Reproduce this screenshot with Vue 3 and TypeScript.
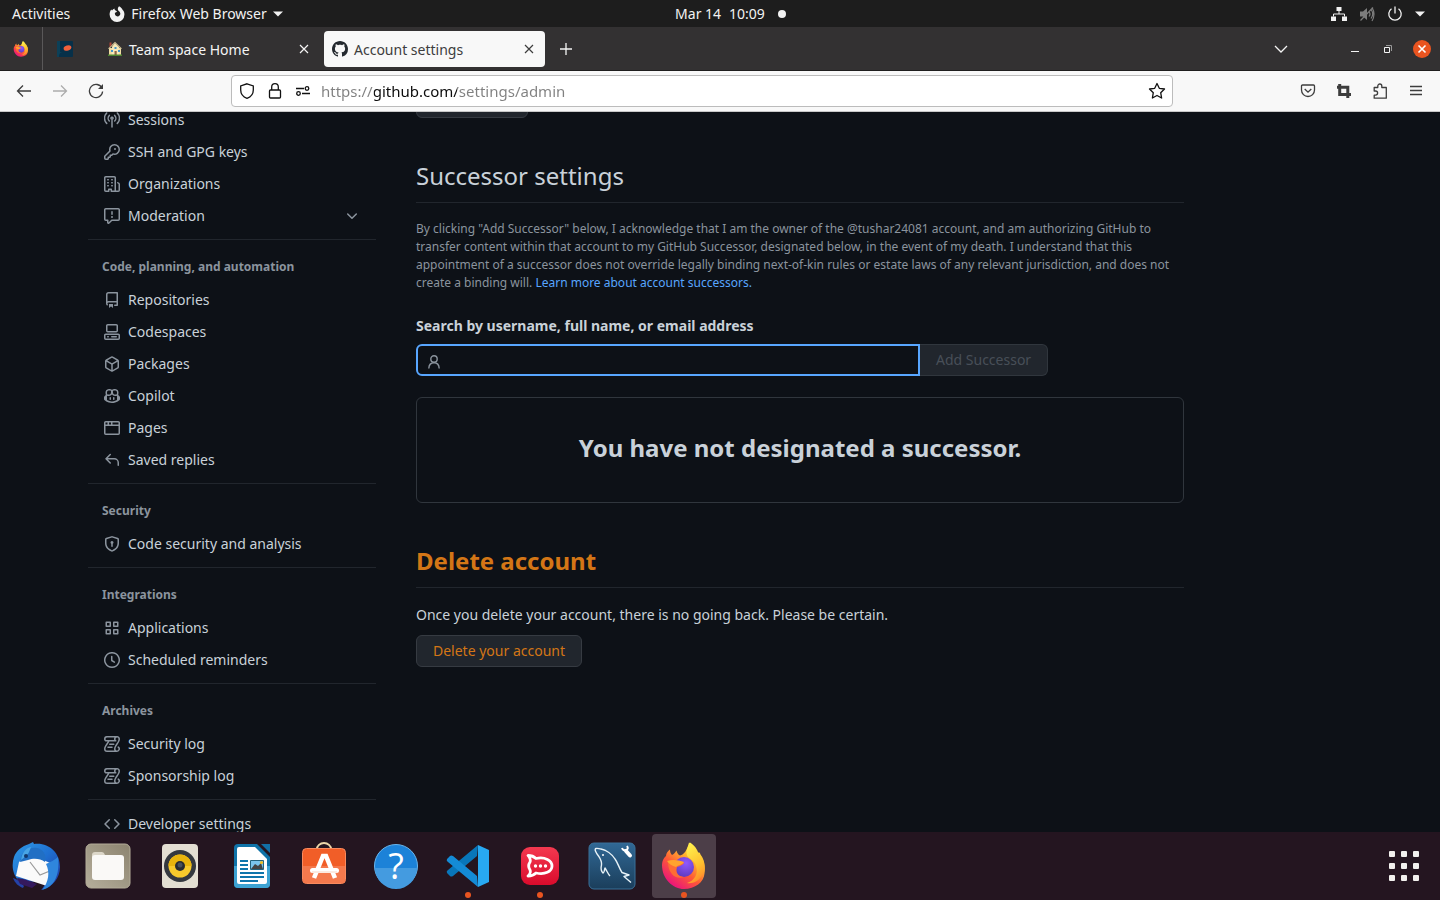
<script setup lang="ts">
import { ref } from 'vue'

interface NavItem {
  label: string
  icon: string
  expandable?: boolean
}
interface NavGroup {
  title?: string
  items: NavItem[]
}
interface Glyph {
  d: string
  outline?: boolean
}

const glyphs: Record<string, Glyph> = {
  broadcast: {
    outline: true,
    d: 'M8 8.5V15M8 5.2a1 1 0 1 0 .01 0M5.3 9a4 4 0 0 1 0-5.6M10.7 9a4 4 0 0 0 0-5.6M2.7 11.4a7.3 7.3 0 0 1 0-10.4M13.3 11.4a7.3 7.3 0 0 0 0-10.4',
  },
  key: {
    d: 'M10.5 0a5.499 5.499 0 1 1-1.288 10.848l-.932.932a.749.749 0 0 1-.53.22H7v.75a.749.749 0 0 1-.22.53l-.5.5a.749.749 0 0 1-.53.22H5v.75a.749.749 0 0 1-.22.53l-.5.5a.749.749 0 0 1-.53.22h-2A1.75 1.75 0 0 1 0 14.25v-2c0-.199.079-.389.22-.53l4.932-4.932A5.5 5.5 0 0 1 10.5 0Zm-4 5.5c-.001.431.069.86.205 1.269a.75.75 0 0 1-.181.768L1.5 12.56v1.69c0 .138.112.25.25.25h1.69l.06-.06v-1.19a.75.75 0 0 1 .75-.75h1.19l.06-.06v-1.19a.75.75 0 0 1 .75-.75h1.19l1.023-1.025a.75.75 0 0 1 .768-.18A4 4 0 1 0 6.5 5.5ZM11 6a1 1 0 1 1 0-2 1 1 0 0 1 0 2Z',
  },
  organization: {
    d: 'M1.75 16A1.75 1.75 0 0 1 0 14.25V1.75C0 .784.784 0 1.75 0h8.5C11.216 0 12 .784 12 1.75v12.5c0 .085-.006.168-.018.25h2.268a.25.25 0 0 0 .25-.25V8.285a.25.25 0 0 0-.111-.208l-1.055-.703a.749.749 0 1 1 .832-1.248l1.055.703c.487.325.779.871.779 1.456v5.965A1.75 1.75 0 0 1 14.25 16h-3.5a.766.766 0 0 1-.197-.026c-.099.017-.2.026-.303.026h-3a.75.75 0 0 1-.75-.75V14h-1v1.25a.75.75 0 0 1-.75.75Zm-.25-1.75c0 .138.112.25.25.25H4v-1.25a.75.75 0 0 1 .75-.75h2.5a.75.75 0 0 1 .75.75v1.25h2.25a.25.25 0 0 0 .25-.25V1.75a.25.25 0 0 0-.25-.25h-8.5a.25.25 0 0 0-.25.25ZM3.75 6h.5a.75.75 0 0 1 0 1.5h-.5a.75.75 0 0 1 0-1.5ZM3 3.75A.75.75 0 0 1 3.75 3h.5a.75.75 0 0 1 0 1.5h-.5A.75.75 0 0 1 3 3.75Zm4 3A.75.75 0 0 1 7.75 6h.5a.75.75 0 0 1 0 1.5h-.5A.75.75 0 0 1 7 6.75ZM7.75 3h.5a.75.75 0 0 1 0 1.5h-.5a.75.75 0 0 1 0-1.5ZM3 9.75A.75.75 0 0 1 3.75 9h.5a.75.75 0 0 1 0 1.5h-.5A.75.75 0 0 1 3 9.75ZM7.75 9h.5a.75.75 0 0 1 0 1.5h-.5a.75.75 0 0 1 0-1.5Z',
  },
  report: {
    d: 'M0 1.75C0 .784.784 0 1.75 0h12.5C15.216 0 16 .784 16 1.75v9.5A1.75 1.75 0 0 1 14.25 13H8.06l-2.573 2.573A1.458 1.458 0 0 1 3 14.543V13H1.75A1.75 1.75 0 0 1 0 11.25Zm1.75-.25a.25.25 0 0 0-.25.25v9.5c0 .138.112.25.25.25h2a.75.75 0 0 1 .75.75v2.19l2.72-2.72a.749.749 0 0 1 .53-.22h6.5a.25.25 0 0 0 .25-.25v-9.5a.25.25 0 0 0-.25-.25Zm7 2.25v2.5a.75.75 0 0 1-1.5 0v-2.5a.75.75 0 0 1 1.5 0ZM9 9a1 1 0 1 1-2 0 1 1 0 0 1 2 0Z',
  },
  repo: {
    d: 'M2 2.5A2.5 2.5 0 0 1 4.5 0h8.75a.75.75 0 0 1 .75.75v12.5a.75.75 0 0 1-.75.75h-2.5a.75.75 0 0 1 0-1.5h1.75v-2h-8a1 1 0 0 0-.714 1.7.75.75 0 1 1-1.072 1.05A2.495 2.495 0 0 1 2 11.5Zm10.5-1h-8a1 1 0 0 0-1 1v6.708A2.486 2.486 0 0 1 4.5 9h8ZM5 12.25a.25.25 0 0 1 .25-.25h3.5a.25.25 0 0 1 .25.25v3.25a.25.25 0 0 1-.4.2l-1.45-1.087a.249.249 0 0 0-.3 0L5.4 15.7a.25.25 0 0 1-.4-.2Z',
  },
  codespaces: {
    d: 'M0 11.25c0-.966.784-1.75 1.75-1.75h12.5c.966 0 1.75.784 1.75 1.75v3A1.75 1.75 0 0 1 14.25 16H1.75A1.75 1.75 0 0 1 0 14.25Zm2-9.5C2 .784 2.784 0 3.75 0h8.5C13.216 0 14 .784 14 1.75v5a1.75 1.75 0 0 1-1.75 1.75h-8.5A1.75 1.75 0 0 1 2 6.75Zm1.75-.25a.25.25 0 0 0-.25.25v5c0 .138.112.25.25.25h8.5a.25.25 0 0 0 .25-.25v-5a.25.25 0 0 0-.25-.25Zm-2 9.5a.25.25 0 0 0-.25.25v3c0 .138.112.25.25.25h12.5a.25.25 0 0 0 .25-.25v-3a.25.25 0 0 0-.25-.25ZM7 12.75a.75.75 0 0 1 .75-.75h4.5a.75.75 0 0 1 0 1.5h-4.5a.75.75 0 0 1-.75-.75Zm-4 0a.75.75 0 0 1 .75-.75h.5a.75.75 0 0 1 0 1.5h-.5a.75.75 0 0 1-.75-.75Z',
  },
  package: {
    d: 'm8.878.392 5.25 3.045c.54.314.872.89.872 1.514v6.098a1.75 1.75 0 0 1-.872 1.514l-5.25 3.045a1.75 1.75 0 0 1-1.756 0l-5.25-3.045A1.75 1.75 0 0 1 1 11.049V4.951c0-.624.332-1.201.872-1.514L7.122.392a1.75 1.75 0 0 1 1.756 0ZM7.875 1.69l-4.63 2.685L8 7.133l4.755-2.758-4.63-2.685a.248.248 0 0 0-.25 0ZM2.5 5.677v5.372c0 .09.047.171.125.216l4.625 2.683V8.432Zm6.25 8.271 4.625-2.683a.25.25 0 0 0 .125-.216V5.677L8.75 8.432Z',
  },
  copilot: {
    d: 'M7.998 15.035c-4.562 0-7.873-2.914-7.998-3.749V9.338c.085-.628.677-1.686 1.588-2.065.013-.07.024-.143.036-.218.029-.183.06-.384.126-.612-.201-.508-.254-1.084-.254-1.656 0-.87.128-1.769.693-2.484.579-.733 1.494-1.124 2.724-1.261 1.206-.134 2.262.034 2.944.765.05.053.096.108.139.165.044-.057.094-.112.143-.165.682-.731 1.738-.899 2.944-.765 1.23.137 2.145.528 2.724 1.261.566.715.693 1.614.693 2.484 0 .572-.053 1.148-.254 1.656.066.228.098.429.126.612.012.076.024.148.037.218.924.385 1.522 1.471 1.591 2.095v1.872c0 .766-3.351 3.795-8.002 3.795Zm0-1.485c2.28 0 4.584-1.11 5.002-1.433V7.862l-.023-.116c-.49.21-1.075.291-1.727.291-1.146 0-2.059-.327-2.71-.991A3.222 3.222 0 0 1 8 6.303a3.24 3.24 0 0 1-.544.743c-.65.664-1.563.991-2.71.991-.652 0-1.236-.081-1.727-.291l-.023.116v4.255c.419.323 2.722 1.433 5.002 1.433ZM6.762 2.83c-.193-.206-.637-.413-1.682-.297-1.019.113-1.479.404-1.713.7-.247.312-.369.789-.369 1.554 0 .793.129 1.171.308 1.371.162.181.519.379 1.442.379.853 0 1.339-.235 1.638-.54.315-.322.527-.827.617-1.553.117-.935-.037-1.395-.241-1.614Zm4.155-.297c-1.044-.116-1.488.091-1.681.297-.204.219-.359.679-.242 1.614.091.726.303 1.231.618 1.553.299.305.784.54 1.638.54.922 0 1.28-.198 1.442-.379.179-.2.308-.578.308-1.371 0-.765-.123-1.242-.37-1.554-.233-.296-.693-.587-1.713-.7ZM6.25 9.037a.75.75 0 0 1 .75.75v1.501a.75.75 0 0 1-1.5 0V9.787a.75.75 0 0 1 .75-.75Zm4.25.75v1.501a.75.75 0 0 1-1.5 0V9.787a.75.75 0 0 1 1.5 0Z',
  },
  browser: {
    d: 'M0 2.75C0 1.784.784 1 1.75 1h12.5c.966 0 1.75.784 1.75 1.75v10.5A1.75 1.75 0 0 1 14.25 15H1.75A1.75 1.75 0 0 1 0 13.25ZM14.5 6h-13v7.25c0 .138.112.25.25.25h12.5a.25.25 0 0 0 .25-.25Zm-6-3.5v2h6V2.75a.25.25 0 0 0-.25-.25ZM5 2.5v2h2v-2Zm-3.25 0a.25.25 0 0 0-.25.25V4.5h2v-2Z',
  },
  reply: {
    d: 'M6.78 1.97a.75.75 0 0 1 0 1.06L3.81 6h6.44A4.75 4.75 0 0 1 15 10.75v2.5a.75.75 0 0 1-1.5 0v-2.5a3.25 3.25 0 0 0-3.25-3.25H3.81l2.97 2.97a.749.749 0 1 1-1.06 1.06L1.47 7.28a.75.75 0 0 1 0-1.06l4.25-4.25a.75.75 0 0 1 1.06 0Z',
  },
  shield: {
    d: 'm8.533.133 5.25 1.68A1.75 1.75 0 0 1 15 3.48V7c0 1.566-.32 3.182-1.303 4.682-.983 1.498-2.585 2.813-5.032 3.855a1.697 1.697 0 0 1-1.33 0c-2.447-1.042-4.049-2.357-5.032-3.855C1.32 10.182 1 8.566 1 7V3.48a1.755 1.755 0 0 1 1.217-1.667l5.25-1.68a1.748 1.748 0 0 1 1.066 0Zm-.61 1.429.001.001-5.25 1.68a.251.251 0 0 0-.174.237V7c0 1.36.275 2.666 1.057 3.859.784 1.194 2.121 2.342 4.366 3.298a.196.196 0 0 0 .154 0c2.245-.957 3.582-2.103 4.366-3.297C13.225 9.666 13.5 8.358 13.5 7V3.48a.25.25 0 0 0-.174-.238l-5.25-1.68a.25.25 0 0 0-.153 0ZM9.5 6.5c0 .536-.286 1.032-.75 1.3v2.45a.75.75 0 0 1-1.5 0V7.8A1.5 1.5 0 1 1 9.5 6.5Z',
  },
  apps: {
    outline: true,
    d: 'M2.25 2.25h4v4h-4zM9.75 2.25h4v4h-4zM2.25 9.75h4v4h-4zM9.75 9.75h4v4h-4z',
  },
  clock: {
    outline: true,
    d: 'M8 .75a7.25 7.25 0 1 0 .01 0M7.75 4.5v4l2.6 1.6',
  },
  log: {
    d: 'M5 8.25a.75.75 0 0 1 .75-.75h4a.75.75 0 0 1 0 1.5h-4A.75.75 0 0 1 5 8.25ZM4 10.5A.75.75 0 0 0 4 12h4a.75.75 0 0 0 0-1.5H4ZM13-.005c1.654 0 3 1.328 3 3 0 .982-.338 1.933-.783 2.818-.443.879-1.028 1.758-1.582 2.588l-.011.017c-.568.853-1.104 1.659-1.501 2.446-.398.789-.623 1.494-.623 2.136a1.5 1.5 0 1 0 2.333-1.248.75.75 0 0 1 .834-1.246A3 3 0 0 1 13 16H3a3 3 0 0 1-3-3c0-1.582.891-3.135 1.777-4.506.209-.322.418-.637.623-.946.473-.709.923-1.386 1.287-2.048H2.51c-.576 0-1.381-.133-1.907-.783A2.68 2.68 0 0 1 0 2.995a3 3 0 0 1 3-3Zm0 1.5a1.5 1.5 0 0 0-1.5 1.5c0 .476.223.834.667 1.132A.75.75 0 0 1 11.75 5.5H5.368c-.467 1.003-1.141 2.015-1.773 2.963-.192.289-.381.571-.558.845C2.13 10.711 1.5 11.916 1.5 13A1.5 1.5 0 0 0 3 14.5h7.401A2.989 2.989 0 0 1 10 13c0-.979.338-1.928.784-2.812.441-.874 1.023-1.748 1.575-2.576l.017-.026c.568-.853 1.103-1.658 1.501-2.448.398-.79.623-1.497.623-2.143 0-.838-.669-1.5-1.5-1.5Zm-10 0a1.5 1.5 0 0 0-1.5 1.5c0 .321.1.569.27.778.097.12.325.227.74.227h7.674A2.737 2.737 0 0 1 10 2.995c0-.546.146-1.059.401-1.5Z',
  },
  code: {
    d: 'm11.28 3.22 4.25 4.25a.75.75 0 0 1 0 1.06l-4.25 4.25a.749.749 0 1 1-1.06-1.06L13.94 8l-3.72-3.72a.749.749 0 1 1 1.06-1.06Zm-6.56 0a.749.749 0 1 1 1.06 1.06L2.06 8l3.72 3.72a.749.749 0 1 1-1.06 1.06L.47 8.53a.75.75 0 0 1 0-1.06Z',
  },
}

const groups: NavGroup[] = [
  {
    items: [
      { label: 'Sessions', icon: 'broadcast' },
      { label: 'SSH and GPG keys', icon: 'key' },
      { label: 'Organizations', icon: 'organization' },
      { label: 'Moderation', icon: 'report', expandable: true },
    ],
  },
  {
    title: 'Code, planning, and automation',
    items: [
      { label: 'Repositories', icon: 'repo' },
      { label: 'Codespaces', icon: 'codespaces' },
      { label: 'Packages', icon: 'package' },
      { label: 'Copilot', icon: 'copilot' },
      { label: 'Pages', icon: 'browser' },
      { label: 'Saved replies', icon: 'reply' },
    ],
  },
  { title: 'Security', items: [{ label: 'Code security and analysis', icon: 'shield' }] },
  {
    title: 'Integrations',
    items: [
      { label: 'Applications', icon: 'apps' },
      { label: 'Scheduled reminders', icon: 'clock' },
    ],
  },
  {
    title: 'Archives',
    items: [
      { label: 'Security log', icon: 'log' },
      { label: 'Sponsorship log', icon: 'log' },
    ],
  },
  { items: [{ label: 'Developer settings', icon: 'code' }] },
]

const address = ref('https://github.com/settings/admin')
const successor = ref('')
</script>

<template>
  <div class="desktop">
    <svg class="defs" width="0" height="0" aria-hidden="true">
      <defs>
        <linearGradient id="fx-body" x1="0.85" y1="0.1" x2="0.25" y2="0.95">
          <stop offset="0" stop-color="#fff44f" />
          <stop offset="0.3" stop-color="#ffb22e" />
          <stop offset="0.6" stop-color="#ff5a36" />
          <stop offset="1" stop-color="#e9127d" />
        </linearGradient>
        <linearGradient id="fx-flame" x1="0.3" y1="0" x2="0.6" y2="1">
          <stop offset="0" stop-color="#fff04d" />
          <stop offset="0.6" stop-color="#ffc02f" />
          <stop offset="1" stop-color="#ff8a2a" />
        </linearGradient>
        <radialGradient id="fx-globe" cx="0.6" cy="0.3" r="0.8">
          <stop offset="0" stop-color="#9059ff" />
          <stop offset="1" stop-color="#5a37b8" />
        </radialGradient>
        <symbol id="firefox" viewBox="0 0 48 48">
          <path d="M2 23c0-6 4-9 4-9 0-3 2-5 4-6.500 0 2 .5 4 2 5.500 2-1 3-2 4.500-4.500.6 2.500 1.500 4 3.500 5 4-1 7-5 9-13 5 3 7 7 8.500 10.500 1-1 1.500 0 2 1.500 4 5 6.500 12 5 19C44 40 35 47 24 47S2 37 2 23Z" fill="url(#fx-body)" />
          <path d="M30 .5c5 3 7 7 8.500 10.500 1-1 1.500 0 2 1.500C46 20 46 29 41 35c-3 4-8 7-14 6 7-2 12-9 9-17-1-5-6-7-8-9-3-4-1-9 2-14.500Z" fill="url(#fx-flame)" />
          <circle cx="24" cy="25" r="10" fill="url(#fx-globe)" />
          <path d="M8 20c5-3 10-1 15 0 3 1-2 4-6 5-2 6 2 10 7 10-8 3-16-3-16-15Z" fill="#ff6c34" />
          <path d="M7 19c5-2 12-1 17 1-2 3-6 3-8 5-4-1-7-3-9-6Z" fill="#ffa32e" />
        </symbol>
      </defs>
    </svg>

    <header class="topbar">
      <div class="topbar-left">
        <button class="plain">Activities</button>
        <button class="plain app-menu">
          <svg width="16" height="16" viewBox="0 0 16 16" fill="#f2f2f2">
            <path fill-rule="evenodd" d="M10 .3c2 1 3 2.300 3.500 3.500C15 5 15.500 7 15.400 8.700A7.400 7.400 0 0 1 .6 8.500C.6 6.500 1.300 5 2.200 3.600l.8 1C3.700 3.500 4.500 3 5.400 2.500c0 1 .4 1.700 1.200 2.100L8 5.300c-.3 1-1.200 1.200-2 1.500C5.500 8 6.500 10.400 8.500 10.400c2 0 3.200-1.600 2.700-3.400C10.800 5.500 9.400 5 9 4 8.500 2.800 9.200 1.300 10 .3Z" />
          </svg>
          <span>Firefox Web Browser</span>
          <svg width="10" height="6" viewBox="0 0 10 6" fill="#f2f2f2"><path d="M0 .5h10L5 5.500Z" /></svg>
        </button>
      </div>
      <button class="plain clock">
        <span>Mar 14</span>
        <span>10:09</span>
        <i class="notice"></i>
      </button>
      <div class="topbar-right">
        <svg width="16" height="14" viewBox="0 0 16 14"><path d="M5.500 0h5v4h-5zM0 9.500h5V14H0zM11 9.500h5V14h-5z" fill="#f2f2f2" /><path d="M8 4v3M2.500 9.500V7h11v2.500" fill="none" stroke="#f2f2f2" stroke-width="1" /></svg>
        <svg width="16" height="16" viewBox="0 0 16 16"><path d="M1 5.500h3L8 2v12l-4-3.500H1Z" fill="#7d7d7d" /><path d="M10 5.500q2 2.500 0 5M12 3.500q3.500 4.500 0 9M13 15q4-7 0-13.500M1.500 14.500 14 1.500" fill="none" stroke="#7d7d7d" stroke-width="1.200" /></svg>
        <svg width="16" height="16" viewBox="0 0 16 16" fill="none" stroke="#f2f2f2" stroke-width="1.300"><path d="M4.500 2.800a6.200 6.200 0 1 0 7 0M8 .5v7" /></svg>
        <svg width="10" height="6" viewBox="0 0 10 6" fill="#f2f2f2"><path d="M0 .5h10L5 5.500Z" /></svg>
      </div>
    </header>

    <div class="tabstrip">
      <button class="pinned" aria-label="Firefox View"><svg width="16" height="16"><use href="#firefox" /></svg></button>
      <i class="tab-separator"></i>
      <button class="pinned second" aria-label="Pinned tab">
        <svg width="16" height="16" viewBox="0 0 16 16"><rect width="16" height="16" rx="1" fill="#073049" /><path d="M2 16C2 12 4 11 7 11H3V0H0v16Z" fill="#0c4058" /><ellipse cx="10.500" cy="7" rx="4" ry="2.500" transform="rotate(-18 10.500 7)" fill="#f0603c" /></svg>
      </button>
      <div class="tab">
        <svg width="16" height="16" viewBox="0 0 16 16">
          <path d="M2 7h12v7H2z" fill="#efdca3" /><path d="M5 5.500 8 2l4 4v8H5Z" fill="#f7e8b8" /><path d="M1 7.500 4.500 4 8 .8 15 7.500l-1 .5-6-5.500L2 8Z" fill="#c7b890" />
          <path d="M2.500 1.500h2V4l-2 2Z" fill="#b04436" /><path d="M4 9h2v2H4zM7.500 6h2v2h-2zM11 9h2v2h-2z" fill="#4596c9" /><path d="M7.500 10h2.200v4H7.500z" fill="#8c6544" /><path d="M1 13.500h14V15H1z" fill="#4a8430" />
        </svg>
        <span class="tab-title">Team space Home</span>
        <button class="plain" aria-label="Close Team space Home"><svg width="16" height="16" viewBox="0 0 16 16" fill="none" stroke="currentColor" stroke-width="1.200"><path d="m4 4 8 8M12 4l-8 8" /></svg></button>
      </div>
      <div class="tab active">
        <svg width="16" height="16" viewBox="0 0 16 16" fill="#24292f"><path d="M8 0C3.580 0 0 3.580 0 8c0 3.540 2.290 6.530 5.470 7.590.4.070.55-.17.55-.38 0-.19-.01-.82-.01-1.490-2.010.37-2.530-.49-2.690-.94-.09-.23-.48-.94-.82-1.130-.28-.15-.68-.52-.01-.53.63-.01 1.080.58 1.230.82.72 1.210 1.870.87 2.330.66.070-.52.28-.87.51-1.070-1.780-.2-3.640-.89-3.640-3.950 0-.87.31-1.590.82-2.150-.08-.2-.36-1.020.08-2.120 0 0 .67-.21 2.200.82.64-.18 1.320-.27 2-.27s1.360.09 2 .27c1.530-1.040 2.200-.82 2.200-.82.44 1.100.16 1.920.08 2.120.51.56.82 1.270.82 2.150 0 3.070-1.870 3.750-3.650 3.950.29.25.54.73.54 1.480 0 1.070-.01 1.930-.01 2.200 0 .21.15.46.55.38A8.010 8.010 0 0 0 16 8c0-4.420-3.580-8-8-8Z" /></svg>
        <span class="tab-title">Account settings</span>
        <button class="plain" aria-label="Close Account settings"><svg width="16" height="16" viewBox="0 0 16 16" fill="none" stroke="currentColor" stroke-width="1.200"><path d="m4 4 8 8M12 4l-8 8" /></svg></button>
      </div>
      <button class="plain new-tab" aria-label="New tab"><svg width="16" height="16" viewBox="0 0 16 16" fill="none" stroke="#f4f4f4" stroke-width="1.300"><path d="M8 2v12M2 8h12" /></svg></button>
      <div class="window-controls">
        <button class="plain all-tabs" aria-label="List all tabs"><svg width="16" height="16" viewBox="0 0 16 16" fill="none" stroke="#f4f4f4" stroke-width="1.300"><path d="m2 5 6 6 6-6" /></svg></button>
        <button class="plain" aria-label="Minimize"><svg width="16" height="16" viewBox="0 0 16 16" fill="#f4f4f4"><path d="M4 10h8v1H4z" /></svg></button>
        <button class="plain" aria-label="Restore"><svg width="16" height="16" viewBox="0 0 16 16" fill="none"><path d="M4.500 6.500h5v5h-5z" stroke="#f4f4f4" /><path d="M6 4.500h5.500V10" stroke="#999" /></svg></button>
        <button class="plain close" aria-label="Close window"><svg width="18" height="18" viewBox="0 0 18 18" fill="none" stroke="#fff" stroke-width="1.600"><path d="m5.500 5.500 7 7M12.500 5.500l-7 7" /></svg></button>
      </div>
    </div>

    <div class="toolbar">
      <button class="tool" aria-label="Back"><svg width="16" height="16" viewBox="0 0 16 16"><path d="M15 8H1.500M7 2.500 1.500 8 7 13.500" /></svg></button>
      <button class="tool" aria-label="Forward" disabled><svg width="16" height="16" viewBox="0 0 16 16"><path d="M1 8h13.500M9 2.500 14.500 8 9 13.500" /></svg></button>
      <button class="tool" aria-label="Reload"><svg width="16" height="16" viewBox="0 0 16 16"><path d="M14 5.200A6.600 6.600 0 1 0 14.600 8.500" /><path d="M15 1v5h-5Z" fill="#3d3d3d" stroke="none" /></svg></button>
      <i class="spacer"></i>
      <div class="urlbar">
        <div class="site-info">
          <svg width="16" height="16" viewBox="0 0 16 16"><path d="M8 .8 14.300 3v4c0 4-2.300 6.800-6.300 8.300C4 13.800 1.700 11 1.700 7V3Z" /></svg>
          <svg width="16" height="16" viewBox="0 0 16 16"><path d="M3.500 7h9a1 1 0 0 1 1 1v6a1 1 0 0 1-1 1h-9a1 1 0 0 1-1-1V8a1 1 0 0 1 1-1ZM4.700 7V4a3.300 3.300 0 0 1 6.600 0v3" /></svg>
          <svg width="16" height="16" viewBox="0 0 16 16"><path d="M1 5.500h8M7 10.500h8" /><circle cx="12" cy="5.500" r="1.800" /><circle cx="3.500" cy="10.500" r="1.800" /></svg>
        </div>
        <input v-model="address" class="address" type="text" aria-label="Address" spellcheck="false" />
        <button class="plain" aria-label="Bookmark this page"><svg width="18" height="18" viewBox="0 0 18 18"><path stroke-linejoin="round" d="m9 1.500 2.300 4.800 5.200.7-3.800 3.700.9 5.300L9 13.500 4.400 16l.9-5.300L1.500 7l5.200-.7Z" /></svg></button>
      </div>
      <i class="spacer"></i>
      <button class="tool" aria-label="Save to Pocket"><svg width="16" height="16" viewBox="0 0 16 16"><path d="M2.500 2h11a1 1 0 0 1 1 1v4a6.500 6.500 0 0 1-13 0V3a1 1 0 0 1 1-1ZM4.700 6 8 9.200 11.300 6" /></svg></button>
      <button class="tool" aria-label="Take screenshot"><svg width="16" height="16" viewBox="0 0 16 16"><path d="M3.700 1v10.500H15M1 4.200h10.800V15" stroke-width="3" /></svg></button>
      <button class="tool" aria-label="Extensions"><svg width="16" height="16" viewBox="0 0 16 16"><path d="M2.200 6V4.500h3.600V3a2 2 0 0 1 4 0v1.500h4.500v10.700H2.200v-3h1.300a2 2 0 0 0 0-4.200H2.200Z" stroke-linejoin="round" /></svg></button>
      <button class="tool" aria-label="Open application menu"><svg width="16" height="16" viewBox="0 0 16 16"><path d="M2 3.500h12M2 7.500h12M2 11.500h12" /></svg></button>
    </div>

    <div class="viewport">
      <div class="page">
        <nav class="sidenav" aria-label="Settings">
          <section v-for="(group, g) in groups" :key="g" class="group">
            <h3 v-if="group.title">{{ group.title }}</h3>
            <ul>
              <li v-for="item in group.items" :key="item.label">
                <a href="#">
                  <svg class="octicon" :class="{ outline: glyphs[item.icon].outline }" width="16" height="16" viewBox="0 0 16 16"><path :d="glyphs[item.icon].d" /></svg>
                  <span>{{ item.label }}</span>
                  <svg v-if="item.expandable" class="octicon outline caret" width="16" height="16" viewBox="0 0 16 16"><path d="m3.700 6 4.300 4.300L12.300 6" /></svg>
                </a>
              </li>
            </ul>
          </section>
        </nav>

        <main class="content">
          <button class="btn stub" aria-label="Start export"></button>

          <section>
            <h2>Successor settings</h2>
            <p class="note">
              By clicking "Add Successor" below, I acknowledge that I am the owner of the @tushar24081 account, and am
              authorizing GitHub to transfer content within that account to my GitHub Successor, designated below, in the
              event of my death. I understand that this appointment of a successor does not override legally binding
              next-of-kin rules or estate laws of any relevant jurisdiction, and does not create a binding will.
              <a href="#">Learn more about account successors.</a>
            </p>
            <form @submit.prevent>
              <label for="successor">Search by username, full name, or email address</label>
              <div class="field-row">
                <div class="field">
                  <svg width="14" height="14" viewBox="0 0 14 14" fill="none" stroke="#8b949e" stroke-width="1.400"><circle cx="7" cy="4" r="3.200" /><path d="M1.800 13.500C2 10 4 7.800 7 7.800s5 2.200 5.200 5.700" /></svg>
                  <input id="successor" v-model="successor" type="text" autocomplete="off" />
                </div>
                <button class="btn add" disabled>Add Successor</button>
              </div>
            </form>
            <div class="blankslate"><h3>You have not designated a successor.</h3></div>
          </section>

          <section>
            <h2 class="danger">Delete account</h2>
            <p class="warning">Once you delete your account, there is no going back. Please be certain.</p>
            <button class="btn delete">Delete your account</button>
          </section>
        </main>
      </div>
    </div>

    <footer class="dock">
      <button class="launcher" aria-label="Thunderbird">
        <svg width="48" height="48" viewBox="0 0 48 48">
          <defs><linearGradient id="tb" x1="0" y1="0" x2="1" y2="1"><stop offset="0" stop-color="#2f9be8" /><stop offset="0.500" stop-color="#1f6fd0" /><stop offset="1" stop-color="#20329c" /></linearGradient></defs>
          <path d="M2 15C4 9 10 4 17 2l4-2 1 2c14-2 26 8 26 23 0 11-7 20-19 23 3-3 4-6 5-9L8 40C1 34-1 24 2 15Z" fill="url(#tb)" />
          <path d="M1 36c4 1 6 3 11 8l-1 2C6 44 3 41 1 36Z" fill="#2442a8" />
          <path d="M4 34 7 20c5-5 15-5 22-3l16 7-10 20Z" fill="#fafafa" />
          <path d="m18 20 10 13 17-7" fill="none" stroke="#999" stroke-width="1.200" />
          <path d="M5 36c9 1 15 4 20 6L20 46l-12-4Z" fill="#34195d" />
          <path d="M9 16c1-7 8-11 16-10 6 1 10 7 8 14-5-4-12-4-17-2l-8 2Z" fill="#216fc4" />
          <path d="M9 18c1-8 5-12 10-13-2 6-3 8-10 13Z" fill="#48a4e6" />
          <path d="M46 15c-3 3-8 5-12 7 4 8 3 18-4 26 12-3 18-14 16-33Z" fill="#2f86dc" />
          <circle cx="14" cy="14" r="2" fill="#12386c" />
        </svg>
      </button>
      <button class="launcher" aria-label="Files">
        <svg width="48" height="48" viewBox="0 0 48 48">
          <defs><linearGradient id="files" x1="0" y1="1" x2="1" y2="0"><stop offset="0" stop-color="#b5ae9b" /><stop offset="1" stop-color="#8c846f" /></linearGradient></defs>
          <rect x="2" y="2" width="44" height="44" rx="5" fill="url(#files)" stroke="#b3ac98" />
          <path d="M8 13q0-3 3-3h7q2 0 3 3v5H8Z" fill="#dcd7c9" /><path d="M8 16q0-3 3-3h26q3 0 3 3v19q0 3-3 3H11q-3 0-3-3Z" fill="#faf9f7" />
        </svg>
      </button>
      <button class="launcher" aria-label="Rhythmbox">
        <svg width="48" height="48" viewBox="0 0 48 48">
          <rect x="6" y="2" width="36" height="44" rx="4" fill="#e3ded2" /><circle cx="24" cy="24" r="16" fill="#34383f" /><circle cx="24" cy="24" r="11.500" fill="#f7ca2c" /><path d="M12.500 24a11.500 11.500 0 0 1 23 0Z" fill="#e9b40d" /><circle cx="24" cy="24" r="5" fill="#282b31" /><circle cx="24" cy="23" r="2.500" fill="#48505d" />
        </svg>
      </button>
      <button class="launcher" aria-label="LibreOffice Writer">
        <svg width="48" height="48" viewBox="0 0 48 48">
          <path d="M6 6q0-4 4-4h19l13 13v27q0 4-4 4H10q-4 0-4-4Z" fill="#0f73a8" /><path d="M6 24h36v18q0 4-4 4H10q-4 0-4-4Z" fill="#3da3d3" /><path d="M33 2h9v9Z" fill="#126fa5" />
          <path d="M9 7q0-2 2-2h16l12 12v23q0 2-2 2H11q-2 0-2-2Z" fill="#fff" />
          <path d="M12 19h8M12 23h8M12 27h8M12 31h24M12 35h24M12 39h18" stroke="#0f75ab" stroke-width="2" />
          <path d="M22.500 18.500h13v9h-13z" fill="#7ac4ed" stroke="#23637e" /><path d="m23 27 4-5 3 2 3-3 2 6Z" fill="#444" /><circle cx="33.500" cy="20.500" r="1.600" fill="#f2be20" />
        </svg>
      </button>
      <button class="launcher" aria-label="Ubuntu Software">
        <svg width="48" height="48" viewBox="0 0 48 48">
          <path d="M17 8V7c0-3 3-6 7-6s7 3 7 6v1" fill="none" stroke="#ecd7aa" stroke-width="2" />
          <rect x="2.500" y="6.500" width="43" height="35" rx="4" fill="#f15e28" stroke="#f98a5e" /><path d="M3 24h42v14q0 3-3 3H6q-3 0-3-3Z" fill="#f4794d" />
          <path d="m14 36 9-22h3l9 22" fill="none" stroke="#fff" stroke-width="4.500" /><path d="M12.500 28.500h24" stroke="#fff" stroke-width="5" stroke-linecap="round" /><path d="M12 30h25" stroke="#f7d5c4" stroke-width="1" />
        </svg>
      </button>
      <button class="launcher" aria-label="Help">
        <svg width="48" height="48" viewBox="0 0 48 48">
          <circle cx="24" cy="24" r="21.500" fill="#1c82d8" stroke="#69b6ed" /><path d="M3 26h42a21 21 0 0 1-42 0Z" fill="#449be0" /><text x="24" y="37" text-anchor="middle" class="help-mark">?</text>
        </svg>
      </button>
      <button class="launcher" aria-label="Visual Studio Code">
        <svg width="48" height="48" viewBox="0 0 48 48">
          <path d="m34 3-1 11L9 34q-2 1-3 0l-3-3q-1-2 1-3Z" fill="#0876ba" /><path d="m34 45-1-11L9 14q-2-1-3 0l-3 3q-1 2 1 3Z" fill="#148bd6" /><path d="m34 3 11 5v32l-11 5Z" fill="#28a9f2" />
        </svg>
        <i class="running"></i>
      </button>
      <button class="launcher" aria-label="Rocket.Chat">
        <svg width="48" height="48" viewBox="0 0 48 48">
          <defs><linearGradient id="rocket" x1="0" y1="0" x2="0" y2="1"><stop offset="0" stop-color="#f43950" /><stop offset="1" stop-color="#d90b2c" /></linearGradient></defs>
          <rect x="5" y="5" width="38" height="38" rx="9" fill="url(#rocket)" /><path d="M12 13.500c3 0 6 1 8 3 9-2 16 2 16 7.500S29 33 20 31c-2 2-5 3-8 3 2-2 3-4 2-6-2-3-2-5 0-8 1-2 0-4-2-6.500Z" fill="none" stroke="#fff" stroke-width="2.800" stroke-linejoin="round" /><g fill="#fff"><circle cx="19.500" cy="24" r="1.700" /><circle cx="24.500" cy="24" r="1.700" /><circle cx="29.500" cy="24" r="1.700" /></g>
        </svg>
        <i class="running"></i>
      </button>
      <button class="launcher" aria-label="MySQL Workbench">
        <svg width="48" height="48" viewBox="0 0 48 48">
          <defs><linearGradient id="mysql" x1="0" y1="0" x2="0" y2="1"><stop offset="0" stop-color="#306895" /><stop offset="1" stop-color="#1b3e5b" /></linearGradient></defs>
          <rect x="1" y="1" width="46" height="46" rx="5" fill="url(#mysql)" stroke="#397199" />
          <path d="M22 34c-2-2-3-5-5-8-1 2 0 4-2 5-3-3-2-5-1.500-8 .5-4-1-6-3-9C8 11 6 7 8 6.500c2-.5 3 .5 5 .5 5 1 11 5 14 10 3 4 4 9 7 13.500l7 2.500-5 1.500 7 6" fill="none" stroke="#e7f2f7" stroke-width="1.400" stroke-linejoin="round" /><circle cx="15" cy="13" r="1" fill="#fff" />
          <path d="m38 9 4 4.500" stroke="#fff" stroke-width="4" stroke-linecap="round" /><path d="M34 6q1 3 4 2t1-4" fill="none" stroke="#fff" stroke-width="2" />
        </svg>
      </button>
      <button class="launcher current" aria-label="Firefox">
        <svg width="48" height="48"><use href="#firefox" /></svg>
        <i class="running"></i>
      </button>
      <button class="launcher show-apps" aria-label="Show applications">
        <svg width="30" height="30" viewBox="0 0 30 30" fill="#f2f0ee">
          <template v-for="row in 3" :key="row">
            <rect v-for="col in 3" :key="col" :x="col * 12 - 12" :y="row * 12 - 12" width="6" height="6" rx="1" />
          </template>
        </svg>
      </button>
    </footer>
  </div>
</template>

<style>
html,
body {
  background: #0d1117;
}
</style>

<style scoped>
* {
  box-sizing: border-box;
}
.desktop {
  display: flex;
  flex-direction: column;
  height: 100vh;
  overflow: hidden;
  font: 14px/20px 'Noto Sans', 'Open Sans', sans-serif;
  color: #c9d1d9;
}
.defs {
  position: absolute;
}
svg {
  display: block;
  flex: none;
}
button,
input {
  font: inherit;
}
.plain,
.pinned,
.tool,
.launcher {
  display: flex;
  align-items: center;
  padding: 0;
  border: 0;
  background: none;
  color: inherit;
}

/* Shell bar */
.topbar {
  display: grid;
  grid-template-columns: 1fr auto 1fr;
  align-items: center;
  flex: none;
  height: 27px;
  padding: 0 15px 0 12px;
  background: #1d1d1d;
  color: #f2f2f2;
}
.topbar-left,
.topbar-right {
  display: flex;
  align-items: center;
}
.topbar-left {
  gap: 39px;
}
.app-menu {
  gap: 6px;
}
.topbar-right {
  justify-content: flex-end;
  gap: 12px;
}
.clock {
  gap: 8px;
  padding-left: 24px;
}
.notice {
  width: 8px;
  height: 8px;
  margin-left: 5px;
  border-radius: 50%;
  background: #f2f2f2;
}

/* Tabs */
.tabstrip {
  display: flex;
  align-items: center;
  flex: none;
  height: 44px;
  background: #333132;
  border-bottom: 1px solid #1f1e1e;
  color: #f4f4f4;
}
.pinned {
  justify-content: center;
  width: 42px;
  height: 36px;
}
.pinned.second {
  width: 44px;
}
.tab-separator {
  width: 1px;
  height: 43px;
  background: #5a5859;
}
.tab {
  display: flex;
  align-items: center;
  gap: 6px;
  width: 221px;
  height: 36px;
  margin-left: 4px;
  padding: 0 8px;
  border-radius: 4px;
}
.tab:not(.active) {
  margin-left: 12px;
}
.tab.active {
  background: #f8f8f8;
  color: #3d3d3d;
}
.tab-title {
  flex: 1;
  padding-top: 2px;
  white-space: nowrap;
}
.new-tab {
  margin-left: 13px;
}
.window-controls {
  display: flex;
  align-items: center;
  gap: 17px;
  margin-left: auto;
  padding-right: 9px;
}
.all-tabs {
  margin-right: 41px;
}
.close {
  border-radius: 50%;
  background: #e95420;
}

/* Toolbar */
.toolbar {
  display: flex;
  align-items: center;
  flex: none;
  height: 41px;
  padding: 0 6px;
  background: #f8f8f8;
  border-bottom: 1px solid #c8c8c8;
}
.tool {
  justify-content: center;
  width: 36px;
  height: 36px;
}
.tool svg,
.urlbar svg {
  fill: none;
  stroke: #3d3d3d;
  stroke-width: 1.3;
}
.tool:disabled {
  opacity: 0.4;
}
.spacer {
  flex: 0 1 117px;
}
.urlbar {
  display: flex;
  align-items: center;
  flex: 1;
  gap: 10px;
  height: 32px;
  padding: 0 6px 0 7px;
  background: #fff;
  border: 1px solid #bcbcbc;
  border-radius: 4px;
}
.urlbar svg {
  stroke: #111;
}
.site-info {
  display: flex;
  gap: 12px;
}
.address {
  flex: 1;
  min-width: 0;
  padding: 0;
  border: 0;
  outline: 0;
  font-size: 15px;
  color: transparent;
  background: linear-gradient(to right, #808080 53px, #0c0c0c 53px 136px, #808080 136px);
  background-clip: text;
  -webkit-background-clip: text;
}

/* Settings page */
.viewport {
  flex: 1;
  min-height: 0;
  overflow: hidden;
  background: #0d1117;
}
.page {
  display: flex;
  gap: 40px;
  max-width: 1280px;
  margin: -26px auto 0;
  padding: 0 8px;
}
.sidenav {
  flex: none;
  width: 288px;
  padding-top: 18px;
}
.group + .group {
  margin-top: 7px;
  padding-top: 8px;
  border-top: 1px solid #21262d;
}
.group h3 {
  margin: 0;
  padding: 10px 14px 8px;
  font-size: 12px;
  line-height: 18px;
  font-weight: 700;
  color: #8b949e;
}
ul {
  margin: 0;
  padding: 0;
  list-style: none;
}
.group a {
  display: flex;
  align-items: center;
  gap: 8px;
  height: 32px;
  padding: 0 16px;
  color: #c9d1d9;
  text-decoration: none;
}
.octicon {
  fill: #8b949e;
}
.octicon.outline {
  fill: none;
  stroke: #8b949e;
  stroke-width: 1.5;
  stroke-linejoin: round;
  stroke-linecap: round;
}
.caret {
  margin-left: auto;
}
.content {
  flex: 1;
  max-width: 768px;
}
.content h2 {
  margin: 40px 0 17px;
  padding-bottom: 8px;
  border-bottom: 1px solid #21262d;
  font-size: 24px;
  line-height: 36px;
  font-weight: 400;
}
.content h2.danger {
  font-weight: 700;
  color: #d47616;
}
.note {
  margin: 0 0 24px;
  font-size: 12px;
  line-height: 18px;
  color: #8b949e;
}
.note a {
  color: #58a6ff;
  text-decoration: none;
}
label {
  display: block;
  margin-bottom: 8px;
  font-weight: 700;
}
.field-row {
  display: flex;
}
.field {
  position: relative;
  flex: 0 1 504px;
}
.field svg {
  position: absolute;
  left: 11px;
  top: 11px;
}
.field input {
  display: block;
  width: 100%;
  height: 32px;
  padding: 0 12px 0 32px;
  color: #c9d1d9;
  background: #0d1117;
  border: 2px solid #58a6ff;
  border-radius: 6px 0 0 6px;
  outline: 0;
}
.btn {
  display: block;
  height: 32px;
  padding: 0 16px;
  border: 1px solid #363b42;
  border-radius: 6px;
  background: #21262d;
  color: #c9d1d9;
}
.btn.stub {
  width: 112px;
}
.btn.add {
  border-color: #30363d;
  border-left: 0;
  border-radius: 0 6px 6px 0;
  color: #484f58;
}
.btn.delete {
  color: #d47616;
}
.blankslate {
  margin-top: 21px;
  padding: 32px;
  border: 1px solid #30363d;
  border-radius: 6px;
  text-align: center;
}
.blankslate h3 {
  margin: 0;
  padding-bottom: 4px;
  font-size: 24px;
  line-height: 36px;
  font-weight: 700;
}
.warning {
  margin: 0 0 10px;
}

/* Dock */
.dock {
  display: flex;
  align-items: center;
  gap: 8px;
  flex: none;
  height: 68px;
  padding: 0 4px;
  background: #241520;
}
.launcher {
  position: relative;
  justify-content: center;
  width: 64px;
  height: 64px;
  border-radius: 4px;
}
.launcher.current {
  background: #4c3e48;
}
.launcher.show-apps {
  margin-left: auto;
}
.running {
  position: absolute;
  left: 29px;
  bottom: 0;
  width: 6px;
  height: 6px;
  border-radius: 50%;
  background: #e95420;
}
.help-mark {
  font: 36px 'Open Sans', 'Noto Sans', sans-serif;
  fill: #fff;
}
</style>
